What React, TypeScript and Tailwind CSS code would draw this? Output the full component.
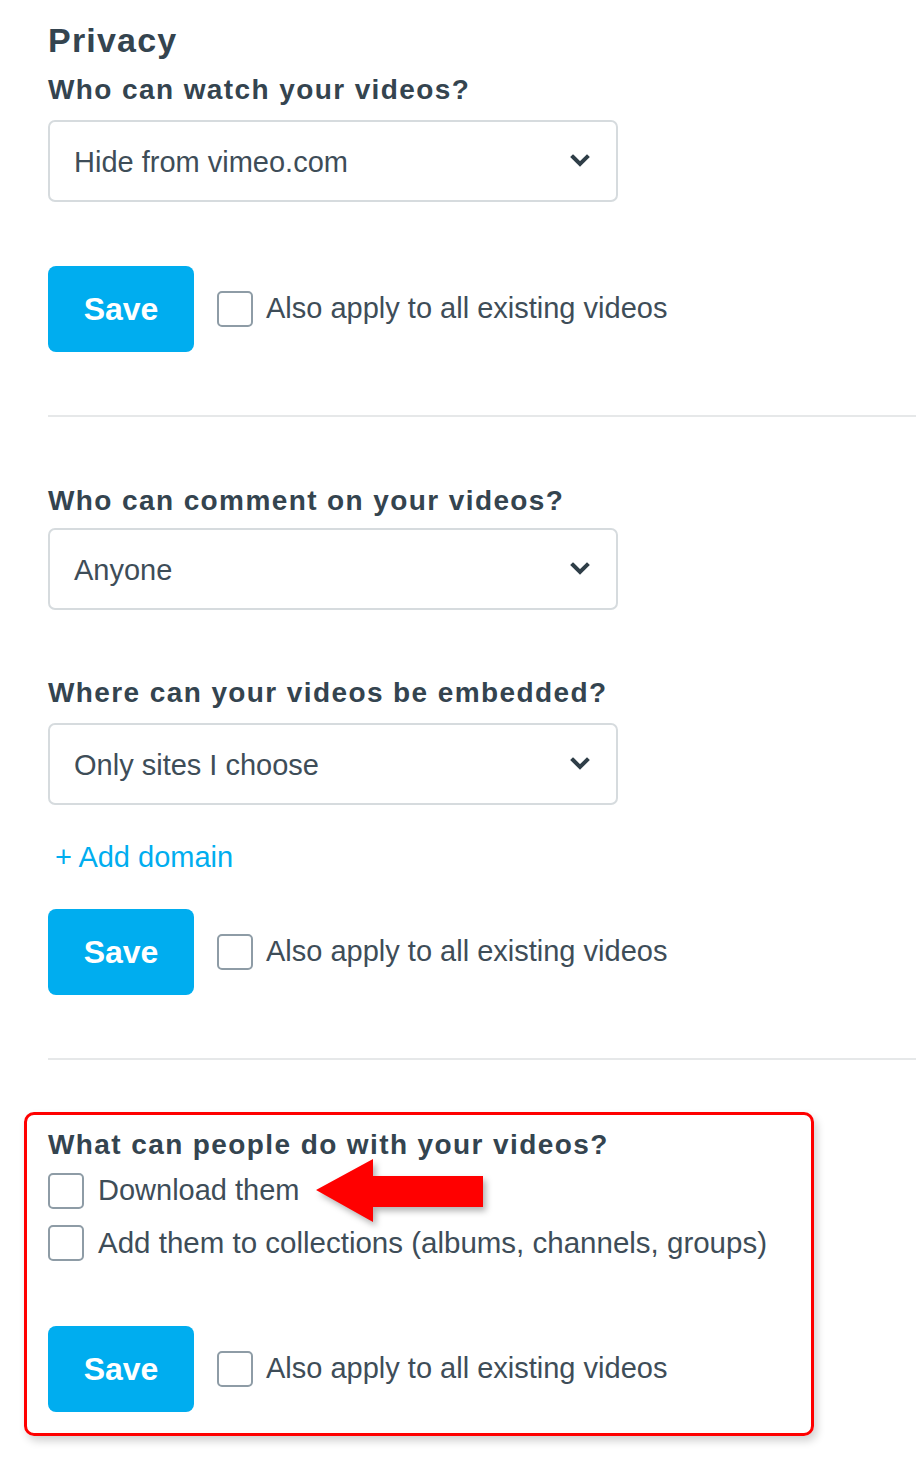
import React from 'react';

const font = { fontFamily: '"Liberation Sans", Arial, sans-serif' };

function Chevron() {
  return (
    <svg width="20" height="14" viewBox="0 0 20 14" className="shrink-0">
      <polyline points="3,3 10,10 17,3" fill="none" stroke="#2f3e48" strokeWidth="4" strokeLinecap="square" />
    </svg>
  );
}

function Select({ value }: { value: string }) {
  return (
    <div className="flex h-[82px] w-[570px] items-center justify-between rounded-[7px] border-2 border-[#d6dbde] bg-white pl-6 pr-[26px]">
      <span className="pt-[4px] text-[29px] text-[#3e4d58]">{value}</span>
      <Chevron />
    </div>
  );
}

function Checkbox() {
  return <div className="h-9 w-9 shrink-0 rounded-[5px] border-2 border-[#8e9ca6] bg-white" />;
}

function SaveRow({ className = '' }: { className?: string }) {
  return (
    <div className={`flex items-center ${className}`}>
      <button className="flex h-[86px] w-[146px] items-center justify-center rounded-[8px] bg-[#00adef] text-[32px] font-bold text-white">
        Save
      </button>
      <div className="ml-[23px] flex items-center gap-[13px]">
        <Checkbox />
        <span className="text-[29px] text-[#3e4d58]">Also apply to all existing videos</span>
      </div>
    </div>
  );
}

function Label({ children, className = '' }: { children: React.ReactNode; className?: string }) {
  return (
    <div className={`text-[28px] font-bold leading-[34px] tracking-[1.4px] text-[#34444f] ${className}`}>{children}</div>
  );
}

export default function App() {
  return (
    <div className="min-h-[1465px] w-[916px] overflow-hidden bg-white pl-12 pt-5" style={font}>
      <h1 className="text-[34px] font-bold leading-[40px] tracking-[1.2px] text-[#34444f]">Privacy</h1>
      <Label className="mt-[13px]">Who can watch your videos?</Label>
      <div className="mt-[13px]">
        <Select value="Hide from vimeo.com" />
      </div>
      <SaveRow className="mt-16" />

      <div className="mt-[63px] h-[2px] w-full bg-[#e6e8e9]" />

      <Label className="mt-[67px]">Who can comment on your videos?</Label>
      <div className="mt-[10px]">
        <Select value="Anyone" />
      </div>
      <Label className="mt-[66px]">Where can your videos be embedded?</Label>
      <div className="mt-[13px]">
        <Select value="Only sites I choose" />
      </div>
      <div className="mt-[35px] pl-[7px] text-[29px] leading-[34px] text-[#00adef]">+ Add domain</div>
      <SaveRow className="mt-[35px]" />

      <div className="mt-[63px] h-[2px] w-full bg-[#e6e8e9]" />

      <section className="relative mt-[68px] pb-[26px]">
        <div className="pointer-events-none absolute left-[-24px] top-[-16px] h-[324px] w-[790px] rounded-[10px] border-[3px] border-[#ff0000] shadow-[3px_5px_8px_rgba(0,0,0,0.18)]" />
        <Label>What can people do with your videos?</Label>
        <div className="mt-[7px] flex items-center gap-[14px]">
          <Checkbox />
          <span className="text-[29px] text-[#3e4d58]">Download them</span>
        </div>
        <div className="mt-[8px] flex items-center gap-[14px]">
          <Checkbox />
          <span className="text-[29.5px] text-[#3e4d58]">Add them to collections (albums, channels, groups)</span>
        </div>
        <SaveRow className="mt-[61px]" />

        <svg
          className="pointer-events-none absolute left-[268px] top-[31px]"
          width="176"
          height="72"
          viewBox="0 0 176 72"
          style={{ filter: 'drop-shadow(3px 4px 3px rgba(0,0,0,0.3))' }}
        >
          <polygon points="0,31 57,0 57,17 167,17 167,48 57,48 57,63" fill="#ff0000" />
        </svg>
      </section>
    </div>
  );
}
